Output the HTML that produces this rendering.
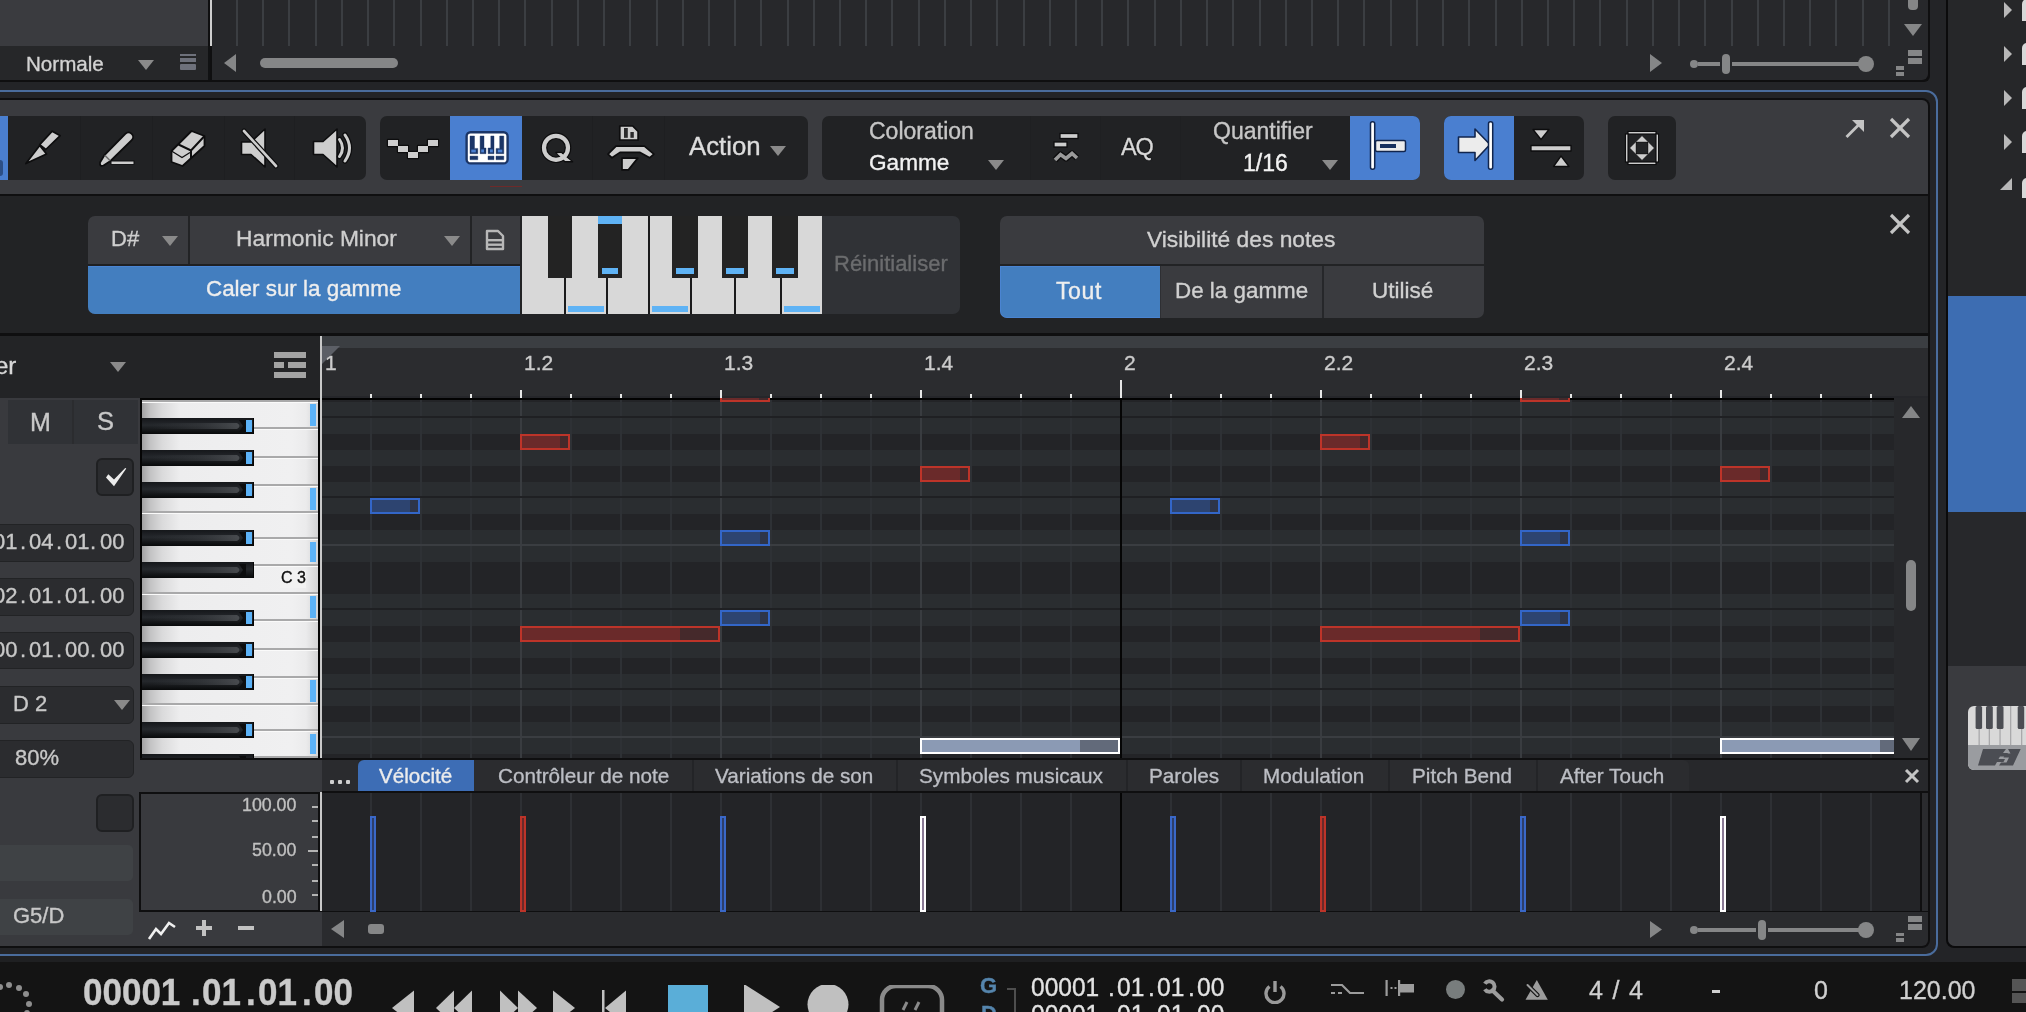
<!DOCTYPE html>
<html><head><meta charset="utf-8"><style>
html,body{margin:0;padding:0;width:2026px;height:1012px;overflow:hidden;background:#232427;}
body{position:relative;font-family:"Liberation Sans", sans-serif;}
body>div{position:absolute;box-sizing:border-box;}
.t{white-space:nowrap;will-change:transform;-webkit-text-stroke:0.35px currentColor;}
</style></head><body>
<div style="left:0px;top:0px;width:2026px;height:1012px;background:#232427;"></div>
<div style="left:0px;top:0px;width:1930px;height:82px;background:#0f0f10;border-bottom-right-radius:6px;"></div>
<div style="left:212px;top:0px;width:1716px;height:80px;background:#27282b;border-bottom-right-radius:6px;"></div>
<div style="left:0px;top:0px;width:208px;height:46px;background:#3a3b3f;"></div>
<div style="left:0px;top:46px;width:208px;height:34px;background:#262729;"></div>
<div style="left:208px;top:46px;width:2px;height:34px;background:#111213;"></div>
<div style="left:210px;top:0px;width:2px;height:46px;background:#cfcfcf;"></div>
<div style="left:236px;top:0px;width:2px;height:46px;background:#3b3e42;"></div>
<div style="left:262px;top:0px;width:2px;height:46px;background:#3b3e42;"></div>
<div style="left:288px;top:0px;width:2px;height:46px;background:#3b3e42;"></div>
<div style="left:315px;top:0px;width:2px;height:46px;background:#3b3e42;"></div>
<div style="left:341px;top:0px;width:2px;height:46px;background:#3b3e42;"></div>
<div style="left:367px;top:0px;width:2px;height:46px;background:#3b3e42;"></div>
<div style="left:393px;top:0px;width:2px;height:46px;background:#3b3e42;"></div>
<div style="left:420px;top:0px;width:2px;height:46px;background:#3b3e42;"></div>
<div style="left:446px;top:0px;width:2px;height:46px;background:#3b3e42;"></div>
<div style="left:472px;top:0px;width:2px;height:46px;background:#3b3e42;"></div>
<div style="left:498px;top:0px;width:2px;height:46px;background:#3b3e42;"></div>
<div style="left:524px;top:0px;width:2px;height:46px;background:#3b3e42;"></div>
<div style="left:551px;top:0px;width:2px;height:46px;background:#3b3e42;"></div>
<div style="left:577px;top:0px;width:2px;height:46px;background:#3b3e42;"></div>
<div style="left:603px;top:0px;width:2px;height:46px;background:#3b3e42;"></div>
<div style="left:629px;top:0px;width:2px;height:46px;background:#3b3e42;"></div>
<div style="left:656px;top:0px;width:2px;height:46px;background:#3b3e42;"></div>
<div style="left:682px;top:0px;width:2px;height:46px;background:#3b3e42;"></div>
<div style="left:708px;top:0px;width:2px;height:46px;background:#3b3e42;"></div>
<div style="left:734px;top:0px;width:2px;height:46px;background:#3b3e42;"></div>
<div style="left:760px;top:0px;width:2px;height:46px;background:#3b3e42;"></div>
<div style="left:787px;top:0px;width:2px;height:46px;background:#3b3e42;"></div>
<div style="left:813px;top:0px;width:2px;height:46px;background:#3b3e42;"></div>
<div style="left:839px;top:0px;width:2px;height:46px;background:#3b3e42;"></div>
<div style="left:865px;top:0px;width:2px;height:46px;background:#3b3e42;"></div>
<div style="left:891px;top:0px;width:2px;height:46px;background:#3b3e42;"></div>
<div style="left:918px;top:0px;width:2px;height:46px;background:#3b3e42;"></div>
<div style="left:944px;top:0px;width:2px;height:46px;background:#3b3e42;"></div>
<div style="left:970px;top:0px;width:2px;height:46px;background:#3b3e42;"></div>
<div style="left:996px;top:0px;width:2px;height:46px;background:#3b3e42;"></div>
<div style="left:1023px;top:0px;width:2px;height:46px;background:#3b3e42;"></div>
<div style="left:1049px;top:0px;width:2px;height:46px;background:#3b3e42;"></div>
<div style="left:1075px;top:0px;width:2px;height:46px;background:#3b3e42;"></div>
<div style="left:1101px;top:0px;width:2px;height:46px;background:#3b3e42;"></div>
<div style="left:1127px;top:0px;width:2px;height:46px;background:#3b3e42;"></div>
<div style="left:1154px;top:0px;width:2px;height:46px;background:#3b3e42;"></div>
<div style="left:1180px;top:0px;width:2px;height:46px;background:#3b3e42;"></div>
<div style="left:1206px;top:0px;width:2px;height:46px;background:#3b3e42;"></div>
<div style="left:1232px;top:0px;width:2px;height:46px;background:#3b3e42;"></div>
<div style="left:1259px;top:0px;width:2px;height:46px;background:#3b3e42;"></div>
<div style="left:1285px;top:0px;width:2px;height:46px;background:#3b3e42;"></div>
<div style="left:1311px;top:0px;width:2px;height:46px;background:#3b3e42;"></div>
<div style="left:1337px;top:0px;width:2px;height:46px;background:#3b3e42;"></div>
<div style="left:1363px;top:0px;width:2px;height:46px;background:#3b3e42;"></div>
<div style="left:1390px;top:0px;width:2px;height:46px;background:#3b3e42;"></div>
<div style="left:1416px;top:0px;width:2px;height:46px;background:#3b3e42;"></div>
<div style="left:1442px;top:0px;width:2px;height:46px;background:#3b3e42;"></div>
<div style="left:1468px;top:0px;width:2px;height:46px;background:#3b3e42;"></div>
<div style="left:1495px;top:0px;width:2px;height:46px;background:#3b3e42;"></div>
<div style="left:1521px;top:0px;width:2px;height:46px;background:#3b3e42;"></div>
<div style="left:1547px;top:0px;width:2px;height:46px;background:#3b3e42;"></div>
<div style="left:1573px;top:0px;width:2px;height:46px;background:#3b3e42;"></div>
<div style="left:1599px;top:0px;width:2px;height:46px;background:#3b3e42;"></div>
<div style="left:1626px;top:0px;width:2px;height:46px;background:#3b3e42;"></div>
<div style="left:1652px;top:0px;width:2px;height:46px;background:#3b3e42;"></div>
<div style="left:1678px;top:0px;width:2px;height:46px;background:#3b3e42;"></div>
<div style="left:1704px;top:0px;width:2px;height:46px;background:#3b3e42;"></div>
<div style="left:1731px;top:0px;width:2px;height:46px;background:#3b3e42;"></div>
<div style="left:1757px;top:0px;width:2px;height:46px;background:#3b3e42;"></div>
<div style="left:1783px;top:0px;width:2px;height:46px;background:#3b3e42;"></div>
<div style="left:1809px;top:0px;width:2px;height:46px;background:#3b3e42;"></div>
<div style="left:1835px;top:0px;width:2px;height:46px;background:#3b3e42;"></div>
<div style="left:1862px;top:0px;width:2px;height:46px;background:#3b3e42;"></div>
<div style="left:1888px;top:0px;width:2px;height:46px;background:#3b3e42;"></div>
<div class="t" style="left:26px;top:53.56px;font-size:20.6px;line-height:20.6px;color:#d2d2d2;font-weight:normal;">Normale</div>
<svg style="position:absolute;left:138px;top:60px;" width="16" height="10" viewBox="0 0 16 10"><polygon points="0,0 16,0 8.0,10" fill="#8a8a8a"/></svg>
<div style="left:180px;top:54px;width:16px;height:2px;background:#6e717b;"></div>
<div style="left:180px;top:58px;width:16px;height:4px;background:#6e717b;"></div>
<div style="left:180px;top:64px;width:16px;height:6px;background:#6e717b;border-radius:1px;"></div>
<svg style="position:absolute;left:224px;top:54px;" width="12" height="18" viewBox="0 0 12 18"><polygon points="12,0 12,18 0,9.0" fill="#858687"/></svg>
<div style="left:260px;top:58px;width:138px;height:10px;background:#858687;border-radius:5px;"></div>
<svg style="position:absolute;left:1650px;top:54px;" width="12" height="18" viewBox="0 0 12 18"><polygon points="0,0 0,18 12,9.0" fill="#858687"/></svg>
<div style="left:1698px;top:62px;width:22px;height:4px;background:#858687;"></div>
<div style="left:1732px;top:62px;width:133px;height:4px;background:#858687;"></div>
<div style="left:1690px;top:60px;width:8px;height:8px;background:#858687;border-radius:50%;"></div>
<div style="left:1722px;top:54px;width:8px;height:20px;background:#858687;border-radius:4px;"></div>
<div style="left:1858px;top:56px;width:16px;height:16px;background:#858687;border-radius:50%;"></div>
<div style="left:1908px;top:50px;width:14px;height:6px;background:#858687;"></div>
<div style="left:1908px;top:58px;width:14px;height:6px;background:#858687;"></div>
<div style="left:1896px;top:66px;width:8px;height:4px;background:#858687;"></div>
<div style="left:1896px;top:72px;width:8px;height:4px;background:#858687;"></div>
<div style="left:1908px;top:-6px;width:10px;height:16px;background:#858687;border-radius:4px;"></div>
<svg style="position:absolute;left:1904px;top:24px;" width="18" height="12" viewBox="0 0 18 12"><polygon points="0,0 18,0 9.0,12" fill="#858687"/></svg>
<div style="left:0px;top:82px;width:1946px;height:930px;background:#232427;"></div>
<div style="left:-10px;top:98px;width:1940px;height:850px;background:#0f0f10;border-radius:8px;"></div>
<div style="left:0px;top:100px;width:1928px;height:94px;background:#3a3b3f;border-top-right-radius:6px;"></div>
<div style="left:-10px;top:116px;width:376px;height:64px;background:#212224;border-radius:7px;"></div>
<div style="left:0px;top:116px;width:8px;height:64px;background:#4a7fd0;"></div>
<div style="left:0px;top:160px;width:3px;height:16px;background:#2c4f86;border-radius:0 4px 4px 0;"></div>
<div style="left:80px;top:116px;width:1px;height:64px;background:#1e1f21;"></div>
<div style="left:152px;top:116px;width:1px;height:64px;background:#1e1f21;"></div>
<div style="left:224px;top:116px;width:1px;height:64px;background:#1e1f21;"></div>
<div style="left:294px;top:116px;width:1px;height:64px;background:#1e1f21;"></div>
<svg style="position:absolute;left:20px;top:126px;" width="46" height="44" viewBox="0 0 46 44"><g stroke="#0d0d0e" stroke-width="1.7" stroke-linejoin="round" fill="#cdcdcd"><polygon points="32.2,5.2 40.2,9.7 25.8,23.5 19.7,18.7"/><polygon points="19.7,19.5 26.5,28 5.9,37.6"/></g></svg>
<svg style="position:absolute;left:95px;top:128px;" width="44" height="42" viewBox="0 0 44 42"><path d="M9.5,27 L30.3,5.8 A4.5,4.5 0 0 1 36.7,12.2 L15.5,33 L8.5,37.5 Q4.5,39 5,34.5 Z" fill="#cdcdcd" stroke="#0d0d0e" stroke-width="1.8" stroke-linejoin="round"/><line x1="9.8" y1="27.3" x2="15.2" y2="32.7" stroke="#6d6d6d" stroke-width="1.6"/><rect x="15.5" y="32.5" width="24" height="4" fill="#0d0d0e"/><rect x="16.5" y="33.5" width="22" height="2.5" fill="#cdcdcd"/></svg>
<svg style="position:absolute;left:166px;top:126px;" width="44" height="46" viewBox="0 0 44 46"><polygon points="25.5,5 38.5,10 38.5,20 16.5,40 5.5,36 5.5,25" fill="#cdcdcd" stroke="#0d0d0e" stroke-width="1.8" stroke-linejoin="round"/><polyline points="12.5,18.5 25,24.5 38.5,10" stroke="#0d0d0e" stroke-width="2" fill="none"/><line x1="25" y1="24.5" x2="25" y2="32" stroke="#0d0d0e" stroke-width="2"/><polyline points="5.5,25 16,31.5 24,26.5" stroke="#0d0d0e" stroke-width="1.3" fill="none"/></svg>
<svg style="position:absolute;left:236px;top:124px;" width="46" height="48" viewBox="0 0 46 48"><g stroke="#0d0d0e" stroke-width="1.6" stroke-linejoin="round" fill="#cdcdcd"><polygon points="5.5,18 15,18 29,5 29,43 15,30.5 5.5,30.5"/></g><line x1="8" y1="7" x2="40" y2="42" stroke="#0d0d0e" stroke-width="5" stroke-linecap="round"/><line x1="8" y1="7" x2="40" y2="42" stroke="#cdcdcd" stroke-width="2.6" stroke-linecap="round"/></svg>
<svg style="position:absolute;left:308px;top:124px;" width="48" height="48" viewBox="0 0 48 48"><g stroke="#0d0d0e" stroke-width="1.6" stroke-linejoin="round" fill="#cdcdcd"><polygon points="5.5,17.5 15,17.5 29,5 29,43 15,30.5 5.5,30.5"/></g><path d="M31.5,15.5 Q37.5,24 31.5,32.5" stroke="#0d0d0e" stroke-width="5.5" fill="none" stroke-linecap="round"/><path d="M31.5,15.5 Q37.5,24 31.5,32.5" stroke="#cdcdcd" stroke-width="3" fill="none" stroke-linecap="round"/><path d="M37,11 Q46,24 37,37" stroke="#0d0d0e" stroke-width="5.5" fill="none" stroke-linecap="round"/><path d="M37,11 Q46,24 37,37" stroke="#cdcdcd" stroke-width="3" fill="none" stroke-linecap="round"/></svg>
<div style="left:380px;top:116px;width:428px;height:64px;background:#212224;border-radius:7px;"></div>
<div style="left:450px;top:116px;width:72px;height:64px;background:#4a7fd0;"></div>
<div style="left:490px;top:186px;width:32px;height:1px;background:#6e2a2a;"></div>
<div style="left:592px;top:116px;width:1px;height:64px;background:#1e1f21;"></div>
<div style="left:664px;top:116px;width:1px;height:64px;background:#1e1f21;"></div>
<svg style="position:absolute;left:385px;top:137px;" width="56" height="24" viewBox="0 0 56 24"><g fill="#0d0d0e" stroke="#0d0d0e" stroke-width="2.4" stroke-linejoin="round"><rect x="3" y="3" width="10" height="6"/><rect x="13" y="9" width="10" height="6"/><rect x="23" y="15" width="10" height="6"/><rect x="33" y="9" width="10" height="6"/><rect x="43" y="3" width="10" height="6"/></g><g fill="#cdcdcd"><rect x="3" y="3" width="10" height="6"/><rect x="13" y="9" width="10" height="6"/><rect x="23" y="15" width="10" height="6"/><rect x="33" y="9" width="10" height="6"/><rect x="43" y="3" width="10" height="6"/></g></svg>
<svg style="position:absolute;left:464px;top:130px;" width="46" height="36" viewBox="0 0 46 36"><rect x="2.6" y="2.2" width="41" height="31.2" rx="4" fill="#ffffff" stroke="#1b3566" stroke-width="2.4"/><g fill="#1b3566" stroke="#1b3566" stroke-width="0.4" stroke-linejoin="round"><path d="M6,6 h4.5 v12.4 h3.3 v5.3 h-7.8z"/><path d="M16.1,6 h3.9 v12 h2 v5.7 h-5.9z"/><path d="M26.8,6 h3.2 v17.7 h-5.9 v-5.7 h2.7z"/><path d="M35.7,6 h4.1 v17.7 h-7.7 v-5.3 h3.6z"/><rect x="6" y="26.1" width="7.8" height="3.6"/><rect x="24" y="26.1" width="6" height="3.6"/><rect x="32" y="26.1" width="7.8" height="3.6"/></g><g fill="#4a7fd0"><rect x="7.3" y="19.6" width="4.5" height="2.8"/><rect x="17.2" y="19.4" width="2.8" height="3"/><rect x="26" y="19.4" width="2.8" height="3"/><rect x="33.8" y="19.6" width="4.5" height="2.8"/></g></svg>
<svg style="position:absolute;left:538px;top:130px;" width="38" height="36" viewBox="0 0 38 36"><circle cx="18" cy="17.8" r="12" stroke="#0d0d0e" stroke-width="6.6" fill="none"/><polygon points="18,22.5 23.5,22.5 34.5,31.8 27,31.8" fill="#cdcdcd" stroke="#0d0d0e" stroke-width="1.6" stroke-linejoin="round"/><circle cx="18" cy="17.8" r="12" stroke="#cdcdcd" stroke-width="4.2" fill="none"/><polygon points="18.8,23.3 23.2,23.3 33,31 27.3,31" fill="#cdcdcd"/></svg>
<svg style="position:absolute;left:604px;top:122px;" width="54" height="52" viewBox="0 0 54 52"><g stroke="#0d0d0e" stroke-width="1.7" stroke-linejoin="round" fill="#cdcdcd"><path d="M15.8,4 H28.7 L34.1,9.5 V18 H15.8 Z"/><path d="M12,24.1 H40.4 L49.9,32.1 L45.6,35.8 L36.1,30.4 H16 L8,35.8 L4,32.1 Z"/><path d="M18,36.1 H33.8 L24.4,47.9 H18 Z"/></g><g fill="#2a2a2b"><rect x="20" y="6" width="3.8" height="9.8"/><rect x="26.4" y="10" width="3.4" height="5.8"/></g></svg>
<div class="t" style="left:689px;top:133.66px;font-size:25.8px;line-height:25.8px;color:#dcdcdc;font-weight:normal;">Action</div>
<svg style="position:absolute;left:770px;top:146px;" width="16" height="10" viewBox="0 0 16 10"><polygon points="0,0 16,0 8.0,10" fill="#8a8a8a"/></svg>
<div style="left:822px;top:116px;width:598px;height:64px;background:#212224;border-radius:7px;"></div>
<div style="left:1350px;top:116px;width:70px;height:64px;background:#4a7fd0;border-radius:0 7px 7px 0;"></div>
<div style="left:1030px;top:116px;width:1px;height:64px;background:#1f2022;"></div>
<div style="left:1100px;top:116px;width:1px;height:64px;background:#1f2022;"></div>
<div style="left:1180px;top:116px;width:1px;height:64px;background:#1f2022;"></div>
<div class="t" style="left:869px;top:119.53px;font-size:23px;line-height:23px;color:#c6c6c6;font-weight:normal;">Coloration</div>
<div class="t" style="left:869px;top:151.87px;font-size:22.6px;line-height:22.6px;color:#f2f2f2;font-weight:normal;">Gamme</div>
<svg style="position:absolute;left:988px;top:160px;" width="16" height="10" viewBox="0 0 16 10"><polygon points="0,0 16,0 8.0,10" fill="#8a8a8a"/></svg>
<svg style="position:absolute;left:1050px;top:130px;" width="32" height="36" viewBox="0 0 32 36"><g fill="#cdcdcd" stroke="#0d0d0e" stroke-width="1.3"><rect x="10" y="3.5" width="18" height="5"/><rect x="4" y="12" width="13" height="5"/></g><path d="M5,30 L10.5,24.5 L16,28.5 L22,23.5 L27,28" stroke="#0d0d0e" stroke-width="6.2" fill="none" stroke-linejoin="round"/><path d="M5,30 L10.5,24.5 L16,28.5 L22,23.5 L27,28" stroke="#9a9a9a" stroke-width="3.6" fill="none" stroke-linejoin="miter"/></svg>
<div class="t" style="left:1121.3px;top:135.81px;font-size:23.5px;line-height:23.5px;color:#d8d8d8;font-weight:normal;letter-spacing:-1.1px;text-shadow:0 0 1.5px #000,0 0 1px #000;">AQ</div>
<div class="t" style="left:1213px;top:119.53px;font-size:23px;line-height:23px;color:#c6c6c6;font-weight:normal;">Quantifier</div>
<div class="t" style="left:1243px;top:151.53px;font-size:23px;line-height:23px;color:#f2f2f2;font-weight:normal;">1/16</div>
<svg style="position:absolute;left:1322px;top:160px;" width="16" height="10" viewBox="0 0 16 10"><polygon points="0,0 16,0 8.0,10" fill="#8a8a8a"/></svg>
<svg style="position:absolute;left:1366px;top:120px;" width="44" height="52" viewBox="0 0 44 52"><rect x="4.5" y="1.8" width="4.2" height="47.5" rx="2" fill="#ffffff" stroke="#11254d" stroke-width="1.5"/><rect x="9.5" y="20.5" width="30" height="11" rx="1.5" fill="#ececec" stroke="#11254d" stroke-width="1.5"/><rect x="14" y="24" width="16" height="4" fill="#17305e"/></svg>
<div style="left:1444px;top:116px;width:140px;height:64px;background:#212224;border-radius:7px;"></div>
<div style="left:1444px;top:116px;width:70px;height:64px;background:#4a7fd0;border-radius:7px 0 0 7px;"></div>
<svg style="position:absolute;left:1454px;top:120px;" width="44" height="52" viewBox="0 0 44 52"><path d="M4.5,17 h16.5 v-8 l15,15.5 l-15,16 v-8 h-16.5z" fill="#ececec" stroke="#11254d" stroke-width="1.6" stroke-linejoin="round"/><rect x="34.5" y="1.8" width="4.2" height="47.5" rx="2" fill="#ffffff" stroke="#11254d" stroke-width="1.5"/></svg>
<svg style="position:absolute;left:1528px;top:126px;" width="48" height="44" viewBox="0 0 48 44"><g fill="#cdcdcd" stroke="#0d0d0e" stroke-width="1.3" stroke-linejoin="round"><polygon points="5,3.5 21,3.5 13,13.5"/><rect x="3" y="19.5" width="40" height="5.5"/><polygon points="25.5,40.5 41,40.5 33,30"/></g></svg>
<div style="left:1608px;top:116px;width:68px;height:64px;background:#212224;border-radius:7px;"></div>
<svg style="position:absolute;left:1623px;top:129px;" width="38" height="38" viewBox="0 0 38 38"><g fill="#e2e2e2" stroke="#0d0d0e" stroke-width="1.2"><rect x="5" y="2.5" width="28" height="2.5"/><rect x="5" y="33" width="28" height="2.5"/><rect x="2.5" y="5" width="2.5" height="28"/><rect x="33" y="5" width="2.5" height="28"/></g><polygon points="19,6.5 31.5,19 19,31.5 6.5,19" fill="#cdcdcd" stroke="#0d0d0e" stroke-width="0.8"/><rect x="13.3" y="13.3" width="11.4" height="11.4" fill="#232426" stroke="#0d0d0e" stroke-width="1"/></svg>
<svg style="position:absolute;left:1843px;top:117px;" width="24" height="24" viewBox="0 0 24 24"><line x1="3.5" y1="20" x2="18" y2="5.5" stroke="#c4c4c4" stroke-width="2.8"/><polygon points="9,3 21,3 21,15" fill="#c4c4c4"/></svg>
<svg style="position:absolute;left:1888px;top:116px;" width="24" height="24" viewBox="0 0 24 24"><g stroke="#c4c4c4" stroke-width="3.2"><line x1="3" y1="3" x2="21" y2="21"/><line x1="21" y1="3" x2="3" y2="21"/></g></svg>
<div style="left:0px;top:196px;width:1928px;height:137px;background:#222325;"></div>
<div style="left:88px;top:216px;width:432px;height:98px;background:#3a3b3f;border-radius:7px 0 0 7px;"></div>
<div style="left:188px;top:216px;width:2px;height:48px;background:#222325;"></div>
<div style="left:470px;top:216px;width:2px;height:48px;background:#222325;"></div>
<div style="left:88px;top:264px;width:432px;height:2px;background:#1f2022;"></div>
<div style="left:88px;top:266px;width:432px;height:48px;background:#437ebf;border-radius:0 0 0 7px;border-top:1px solid #4a84d2;"></div>
<div class="t" style="left:111px;top:228.08px;font-size:22px;line-height:22px;color:#cfcfcf;font-weight:normal;">D#</div>
<svg style="position:absolute;left:162px;top:236px;" width="16" height="10" viewBox="0 0 16 10"><polygon points="0,0 16,0 8.0,10" fill="#8a8a8a"/></svg>
<div class="t" style="left:236px;top:227.40px;font-size:22.8px;line-height:22.8px;color:#cfcfcf;font-weight:normal;">Harmonic Minor</div>
<svg style="position:absolute;left:444px;top:236px;" width="16" height="10" viewBox="0 0 16 10"><polygon points="0,0 16,0 8.0,10" fill="#8a8a8a"/></svg>
<svg style="position:absolute;left:484px;top:228px;" width="24" height="24" viewBox="0 0 24 24"><path d="M3,3 h11 l5,5 v13 h-16z" fill="none" stroke="#b8b8b8" stroke-width="2.4" stroke-linejoin="round"/><rect x="3" y="11" width="16" height="2.4" fill="#b8b8b8"/><rect x="3" y="15.5" width="16" height="2.4" fill="#b8b8b8"/></svg>
<div class="t" style="left:206px;top:278.24px;font-size:22.4px;line-height:22.4px;color:#eeeeee;font-weight:normal;">Caler sur la gamme</div>
<div style="left:522px;top:216px;width:300px;height:98px;background:#1a1a1b;"></div>
<div style="left:522px;top:216px;width:42px;height:98px;background:#d8d8d8;"></div>
<div style="left:566px;top:216px;width:40px;height:98px;background:#d8d8d8;"></div>
<div style="left:608px;top:216px;width:40px;height:98px;background:#d8d8d8;"></div>
<div style="left:650px;top:216px;width:40px;height:98px;background:#d8d8d8;"></div>
<div style="left:692px;top:216px;width:42px;height:98px;background:#d8d8d8;"></div>
<div style="left:736px;top:216px;width:44px;height:98px;background:#d8d8d8;"></div>
<div style="left:782px;top:216px;width:40px;height:98px;background:#d8d8d8;"></div>
<div style="left:548px;top:216px;width:24px;height:62px;background:#232323;"></div>
<div style="left:598px;top:216px;width:24px;height:62px;background:#232323;"></div>
<div style="left:672px;top:216px;width:26px;height:62px;background:#232323;"></div>
<div style="left:722px;top:216px;width:26px;height:62px;background:#232323;"></div>
<div style="left:772px;top:216px;width:26px;height:62px;background:#232323;"></div>
<div style="left:598px;top:216px;width:24px;height:8px;background:#5fb3f5;"></div>
<div style="left:602px;top:268px;width:16px;height:6px;background:#5fb3f5;"></div>
<div style="left:676px;top:268px;width:18px;height:6px;background:#5fb3f5;"></div>
<div style="left:726px;top:268px;width:18px;height:6px;background:#5fb3f5;"></div>
<div style="left:776px;top:268px;width:18px;height:6px;background:#5fb3f5;"></div>
<div style="left:568px;top:306px;width:36px;height:6px;background:#5fb3f5;"></div>
<div style="left:652px;top:306px;width:36px;height:6px;background:#5fb3f5;"></div>
<div style="left:784px;top:306px;width:36px;height:6px;background:#5fb3f5;"></div>
<div style="left:822px;top:216px;width:138px;height:98px;background:#303236;border-radius:0 7px 7px 0;"></div>
<div class="t" style="left:834px;top:253.18px;font-size:22px;line-height:22px;color:#6b6c6e;font-weight:normal;">Réinitialiser</div>
<div style="left:1000px;top:216px;width:484px;height:102px;background:#3a3b3f;border-radius:7px;"></div>
<div style="left:1000px;top:264px;width:484px;height:2px;background:#222325;"></div>
<div style="left:1000px;top:266px;width:160px;height:52px;background:#437ebf;border-radius:0 0 0 7px;border-top:1px solid #4a84d2;border-left:1px solid #4a84d2;border-bottom:1px solid #4a84d2;"></div>
<div style="left:1160px;top:266px;width:1px;height:52px;background:#2e2f33;"></div>
<div style="left:1322px;top:266px;width:2px;height:52px;background:#26272a;"></div>
<div class="t" style="left:1147px;top:228.20px;font-size:22.8px;line-height:22.8px;color:#d0d0d0;font-weight:normal;">Visibilité des notes</div>
<div class="t" style="left:1056px;top:279.83px;font-size:23px;line-height:23px;color:#eeeeee;font-weight:normal;letter-spacing:0.6px;">Tout</div>
<div class="t" style="left:1175px;top:280.34px;font-size:22.4px;line-height:22.4px;color:#d0d0d0;font-weight:normal;">De la gamme</div>
<div class="t" style="left:1372px;top:280.25px;font-size:22.5px;line-height:22.5px;color:#d0d0d0;font-weight:normal;">Utilisé</div>
<svg style="position:absolute;left:1888px;top:212px;" width="24" height="24" viewBox="0 0 24 24"><g stroke="#c4c4c4" stroke-width="3.2"><line x1="3" y1="3" x2="21" y2="21"/><line x1="21" y1="3" x2="3" y2="21"/></g></svg>
<div style="left:0px;top:333px;width:1928px;height:3px;background:#0f0f10;"></div>
<div style="left:0px;top:336px;width:320px;height:62px;background:#232426;"></div>
<div class="t" style="left:-5px;top:353.68px;font-size:24px;line-height:24px;color:#d8d8d8;font-weight:normal;">er</div>
<svg style="position:absolute;left:110px;top:362px;" width="16" height="10" viewBox="0 0 16 10"><polygon points="0,0 16,0 8.0,10" fill="#8a8a8a"/></svg>
<div style="left:274px;top:352px;width:32px;height:6px;background:#a3a3a3;"></div>
<div style="left:274px;top:362px;width:10px;height:6px;background:#a3a3a3;"></div>
<div style="left:288px;top:362px;width:18px;height:6px;background:#a3a3a3;"></div>
<div style="left:274px;top:372px;width:32px;height:6px;background:#a3a3a3;"></div>
<div style="left:322px;top:336px;width:1606px;height:12px;background:#3b3e42;"></div>
<div style="left:322px;top:348px;width:1606px;height:48px;background:#2b2c2f;"></div>
<div style="left:322px;top:396px;width:1606px;height:2px;background:#25262a;"></div>
<svg style="position:absolute;left:322px;top:346px;" width="20" height="19" viewBox="0 0 20 19"><polygon points="0,0 18,0 0,18" fill="#5c5f66"/></svg>
<div class="t" style="left:325px;top:352.42px;font-size:21px;line-height:21px;color:#cccccc;font-weight:normal;">1</div>
<div class="t" style="left:524px;top:352.42px;font-size:21px;line-height:21px;color:#cccccc;font-weight:normal;">1.2</div>
<div class="t" style="left:724px;top:352.42px;font-size:21px;line-height:21px;color:#cccccc;font-weight:normal;">1.3</div>
<div class="t" style="left:924px;top:352.42px;font-size:21px;line-height:21px;color:#cccccc;font-weight:normal;">1.4</div>
<div class="t" style="left:1124px;top:352.42px;font-size:21px;line-height:21px;color:#cccccc;font-weight:normal;">2</div>
<div class="t" style="left:1324px;top:352.42px;font-size:21px;line-height:21px;color:#cccccc;font-weight:normal;">2.2</div>
<div class="t" style="left:1524px;top:352.42px;font-size:21px;line-height:21px;color:#cccccc;font-weight:normal;">2.3</div>
<div class="t" style="left:1724px;top:352.42px;font-size:21px;line-height:21px;color:#cccccc;font-weight:normal;">2.4</div>
<div style="left:370px;top:394px;width:2px;height:4px;background:#e6e6e6;"></div>
<div style="left:420px;top:394px;width:2px;height:4px;background:#e6e6e6;"></div>
<div style="left:470px;top:394px;width:2px;height:4px;background:#e6e6e6;"></div>
<div style="left:520px;top:390px;width:2px;height:8px;background:#e6e6e6;"></div>
<div style="left:570px;top:394px;width:2px;height:4px;background:#e6e6e6;"></div>
<div style="left:620px;top:394px;width:2px;height:4px;background:#e6e6e6;"></div>
<div style="left:670px;top:394px;width:2px;height:4px;background:#e6e6e6;"></div>
<div style="left:720px;top:390px;width:2px;height:8px;background:#e6e6e6;"></div>
<div style="left:770px;top:394px;width:2px;height:4px;background:#e6e6e6;"></div>
<div style="left:820px;top:394px;width:2px;height:4px;background:#e6e6e6;"></div>
<div style="left:870px;top:394px;width:2px;height:4px;background:#e6e6e6;"></div>
<div style="left:920px;top:390px;width:2px;height:8px;background:#e6e6e6;"></div>
<div style="left:970px;top:394px;width:2px;height:4px;background:#e6e6e6;"></div>
<div style="left:1020px;top:394px;width:2px;height:4px;background:#e6e6e6;"></div>
<div style="left:1070px;top:394px;width:2px;height:4px;background:#e6e6e6;"></div>
<div style="left:1120px;top:380px;width:2px;height:18px;background:#e6e6e6;"></div>
<div style="left:1170px;top:394px;width:2px;height:4px;background:#e6e6e6;"></div>
<div style="left:1220px;top:394px;width:2px;height:4px;background:#e6e6e6;"></div>
<div style="left:1270px;top:394px;width:2px;height:4px;background:#e6e6e6;"></div>
<div style="left:1320px;top:390px;width:2px;height:8px;background:#e6e6e6;"></div>
<div style="left:1370px;top:394px;width:2px;height:4px;background:#e6e6e6;"></div>
<div style="left:1420px;top:394px;width:2px;height:4px;background:#e6e6e6;"></div>
<div style="left:1470px;top:394px;width:2px;height:4px;background:#e6e6e6;"></div>
<div style="left:1520px;top:390px;width:2px;height:8px;background:#e6e6e6;"></div>
<div style="left:1570px;top:394px;width:2px;height:4px;background:#e6e6e6;"></div>
<div style="left:1620px;top:394px;width:2px;height:4px;background:#e6e6e6;"></div>
<div style="left:1670px;top:394px;width:2px;height:4px;background:#e6e6e6;"></div>
<div style="left:1720px;top:390px;width:2px;height:8px;background:#e6e6e6;"></div>
<div style="left:1770px;top:394px;width:2px;height:4px;background:#e6e6e6;"></div>
<div style="left:1820px;top:394px;width:2px;height:4px;background:#e6e6e6;"></div>
<div style="left:1870px;top:394px;width:2px;height:4px;background:#e6e6e6;"></div>
<div style="left:322px;top:398px;width:1572px;height:360px;background:#232427;"></div>
<div style="left:322px;top:398px;width:1572px;height:4px;background:#232427;"></div>
<div style="left:322px;top:402px;width:1572px;height:16px;background:#2a2d30;"></div>
<div style="left:322px;top:418px;width:1572px;height:16px;background:#2a2d30;"></div>
<div style="left:322px;top:434px;width:1572px;height:16px;background:#232427;"></div>
<div style="left:322px;top:450px;width:1572px;height:16px;background:#2a2d30;"></div>
<div style="left:322px;top:466px;width:1572px;height:16px;background:#232427;"></div>
<div style="left:322px;top:482px;width:1572px;height:16px;background:#2a2d30;"></div>
<div style="left:322px;top:498px;width:1572px;height:16px;background:#2a2d30;"></div>
<div style="left:322px;top:514px;width:1572px;height:16px;background:#232427;"></div>
<div style="left:322px;top:530px;width:1572px;height:16px;background:#2a2d30;"></div>
<div style="left:322px;top:546px;width:1572px;height:16px;background:#2a2d30;"></div>
<div style="left:322px;top:562px;width:1572px;height:16px;background:#232427;"></div>
<div style="left:322px;top:578px;width:1572px;height:16px;background:#232427;"></div>
<div style="left:322px;top:594px;width:1572px;height:16px;background:#2a2d30;"></div>
<div style="left:322px;top:610px;width:1572px;height:16px;background:#2a2d30;"></div>
<div style="left:322px;top:626px;width:1572px;height:16px;background:#232427;"></div>
<div style="left:322px;top:642px;width:1572px;height:16px;background:#2a2d30;"></div>
<div style="left:322px;top:658px;width:1572px;height:16px;background:#232427;"></div>
<div style="left:322px;top:674px;width:1572px;height:16px;background:#2a2d30;"></div>
<div style="left:322px;top:690px;width:1572px;height:16px;background:#2a2d30;"></div>
<div style="left:322px;top:706px;width:1572px;height:16px;background:#232427;"></div>
<div style="left:322px;top:722px;width:1572px;height:16px;background:#2a2d30;"></div>
<div style="left:322px;top:738px;width:1572px;height:16px;background:#2a2d30;"></div>
<div style="left:322px;top:754px;width:1572px;height:4px;background:#232427;"></div>
<div style="left:370px;top:398px;width:2px;height:360px;background:#2e3135;"></div>
<div style="left:420px;top:398px;width:2px;height:360px;background:#2e3135;"></div>
<div style="left:470px;top:398px;width:2px;height:360px;background:#2e3135;"></div>
<div style="left:520px;top:398px;width:2px;height:360px;background:#393c40;"></div>
<div style="left:570px;top:398px;width:2px;height:360px;background:#2e3135;"></div>
<div style="left:620px;top:398px;width:2px;height:360px;background:#2e3135;"></div>
<div style="left:670px;top:398px;width:2px;height:360px;background:#2e3135;"></div>
<div style="left:720px;top:398px;width:2px;height:360px;background:#393c40;"></div>
<div style="left:770px;top:398px;width:2px;height:360px;background:#2e3135;"></div>
<div style="left:820px;top:398px;width:2px;height:360px;background:#2e3135;"></div>
<div style="left:870px;top:398px;width:2px;height:360px;background:#2e3135;"></div>
<div style="left:920px;top:398px;width:2px;height:360px;background:#393c40;"></div>
<div style="left:970px;top:398px;width:2px;height:360px;background:#2e3135;"></div>
<div style="left:1020px;top:398px;width:2px;height:360px;background:#2e3135;"></div>
<div style="left:1070px;top:398px;width:2px;height:360px;background:#2e3135;"></div>
<div style="left:1120px;top:398px;width:2px;height:360px;background:#050505;"></div>
<div style="left:1170px;top:398px;width:2px;height:360px;background:#2e3135;"></div>
<div style="left:1220px;top:398px;width:2px;height:360px;background:#2e3135;"></div>
<div style="left:1270px;top:398px;width:2px;height:360px;background:#2e3135;"></div>
<div style="left:1320px;top:398px;width:2px;height:360px;background:#393c40;"></div>
<div style="left:1370px;top:398px;width:2px;height:360px;background:#2e3135;"></div>
<div style="left:1420px;top:398px;width:2px;height:360px;background:#2e3135;"></div>
<div style="left:1470px;top:398px;width:2px;height:360px;background:#2e3135;"></div>
<div style="left:1520px;top:398px;width:2px;height:360px;background:#393c40;"></div>
<div style="left:1570px;top:398px;width:2px;height:360px;background:#2e3135;"></div>
<div style="left:1620px;top:398px;width:2px;height:360px;background:#2e3135;"></div>
<div style="left:1670px;top:398px;width:2px;height:360px;background:#2e3135;"></div>
<div style="left:1720px;top:398px;width:2px;height:360px;background:#393c40;"></div>
<div style="left:1770px;top:398px;width:2px;height:360px;background:#2e3135;"></div>
<div style="left:1820px;top:398px;width:2px;height:360px;background:#2e3135;"></div>
<div style="left:1870px;top:398px;width:2px;height:360px;background:#2e3135;"></div>
<div style="left:322px;top:416px;width:1572px;height:2px;background:#1f2023;"></div>
<div style="left:322px;top:496px;width:1572px;height:2px;background:#1f2023;"></div>
<div style="left:322px;top:544px;width:1572px;height:2px;background:#3a3d41;"></div>
<div style="left:322px;top:608px;width:1572px;height:2px;background:#1f2023;"></div>
<div style="left:322px;top:688px;width:1572px;height:2px;background:#1f2023;"></div>
<div style="left:322px;top:736px;width:1572px;height:2px;background:#3a3d41;"></div>
<div style="left:1120px;top:398px;width:2px;height:360px;background:#050505;"></div>
<div style="left:322px;top:398px;width:1572px;height:2px;background:#020202;"></div>
<div style="left:322px;top:398px;width:1572px;height:360px;overflow:hidden;"><div style="position:absolute;left:398px;top:-12px;width:50px;height:16px;box-sizing:border-box;border:2px solid #bd3429;background:linear-gradient(90deg,#6a2a2a 37px,#45292b 37px);"></div><div style="position:absolute;left:1198px;top:-12px;width:50px;height:16px;box-sizing:border-box;border:2px solid #bd3429;background:linear-gradient(90deg,#6a2a2a 37px,#45292b 37px);"></div></div>
<div style="left:520px;top:434px;width:50px;height:16px;border:2px solid #bd3429;background:linear-gradient(90deg,#6a2a2a 38px,#45292b 38px);"></div>
<div style="left:370px;top:498px;width:50px;height:16px;border:2px solid #3366c8;background:linear-gradient(90deg,#2d4470 38px,#2e3549 38px);"></div>
<div style="left:920px;top:466px;width:50px;height:16px;border:2px solid #bd3429;background:linear-gradient(90deg,#6a2a2a 38px,#45292b 38px);"></div>
<div style="left:720px;top:530px;width:50px;height:16px;border:2px solid #3366c8;background:linear-gradient(90deg,#2d4470 38px,#2e3549 38px);"></div>
<div style="left:720px;top:610px;width:50px;height:16px;border:2px solid #3366c8;background:linear-gradient(90deg,#2d4470 38px,#2e3549 38px);"></div>
<div style="left:520px;top:626px;width:200px;height:16px;border:2px solid #bd3429;background:linear-gradient(90deg,#6a2a2a 158px,#45292b 158px);"></div>
<div style="left:920px;top:738px;width:200px;height:16px;border:2px solid #ffffff;background:linear-gradient(90deg,#8b9ab4 158px,#626a7a 158px);"></div>
<div style="left:1170px;top:498px;width:50px;height:16px;border:2px solid #3366c8;background:linear-gradient(90deg,#2d4470 38px,#2e3549 38px);"></div>
<div style="left:1320px;top:434px;width:50px;height:16px;border:2px solid #bd3429;background:linear-gradient(90deg,#6a2a2a 38px,#45292b 38px);"></div>
<div style="left:1720px;top:466px;width:50px;height:16px;border:2px solid #bd3429;background:linear-gradient(90deg,#6a2a2a 38px,#45292b 38px);"></div>
<div style="left:1520px;top:530px;width:50px;height:16px;border:2px solid #3366c8;background:linear-gradient(90deg,#2d4470 38px,#2e3549 38px);"></div>
<div style="left:1520px;top:610px;width:50px;height:16px;border:2px solid #3366c8;background:linear-gradient(90deg,#2d4470 38px,#2e3549 38px);"></div>
<div style="left:1320px;top:626px;width:200px;height:16px;border:2px solid #bd3429;background:linear-gradient(90deg,#6a2a2a 158px,#45292b 158px);"></div>
<div style="left:1720px;top:738px;width:174px;height:16px;border:2px solid #ffffff;border-right:none;background:linear-gradient(90deg,#8b9ab4 158px,#626a7a 158px);"></div>
<div style="left:1894px;top:398px;width:34px;height:360px;background:#27282b;"></div>
<svg style="position:absolute;left:1902px;top:406px;" width="18" height="12" viewBox="0 0 18 12"><polygon points="0,12 18,12 9.0,0" fill="#858687"/></svg>
<div style="left:1906px;top:560px;width:10px;height:51px;background:#858687;border-radius:5px;"></div>
<svg style="position:absolute;left:1902px;top:738px;" width="18" height="13" viewBox="0 0 18 13"><polygon points="0,0 18,0 9.0,13" fill="#858687"/></svg>
<div style="left:0px;top:398px;width:140px;height:548px;background:#393a3e;"></div>
<div style="left:8px;top:400px;width:130px;height:44px;background:#303236;"></div>
<div style="left:72px;top:400px;width:1.5px;height:44px;background:#2b2c2f;"></div>
<div class="t" style="left:29.5px;top:409.84px;font-size:25px;line-height:25px;color:#c8c8c8;font-weight:normal;">M</div>
<div class="t" style="left:96.5px;top:409.41px;font-size:25.5px;line-height:25.5px;color:#c8c8c8;font-weight:normal;">S</div>
<div style="left:96px;top:458px;width:38px;height:38px;background:#2b2c2f;border:2px solid #1f2022;border-radius:6px;"></div>
<svg style="position:absolute;left:104px;top:466px;" width="24" height="24" viewBox="0 0 24 24"><polygon points="2,11.4 4.3,8.3 10,13.6 21.2,2 22.3,2.6 10,20.2" fill="#ececec"/></svg>
<div style="left:-10px;top:524px;width:144px;height:38px;background:#2b2c2f;border:1.5px solid #222325;border-radius:6px;"></div>
<div style="left:-10px;top:578px;width:144px;height:38px;background:#2b2c2f;border:1.5px solid #222325;border-radius:6px;"></div>
<div style="left:-10px;top:632px;width:144px;height:37px;background:#2b2c2f;border:1.5px solid #222325;border-radius:6px;"></div>
<div style="left:-10px;top:686px;width:144px;height:38px;background:#2b2c2f;border:1.5px solid #222325;border-radius:6px;"></div>
<div style="left:-10px;top:740px;width:144px;height:38px;background:#2b2c2f;border:1.5px solid #222325;border-radius:6px;"></div>
<div class="t" style="left:-7px;top:530.78px;font-size:22px;line-height:22px;color:#c8c8c8;font-weight:normal;">01</div>
<div class="t" style="left:28.5px;top:530.78px;font-size:22px;line-height:22px;color:#c8c8c8;font-weight:normal;">04</div>
<div class="t" style="left:64.8px;top:530.78px;font-size:22px;line-height:22px;color:#c8c8c8;font-weight:normal;">01</div>
<div class="t" style="left:100.4px;top:530.78px;font-size:22px;line-height:22px;color:#c8c8c8;font-weight:normal;">00</div>
<div class="t" style="left:20px;top:530.78px;font-size:22px;line-height:22px;color:#c8c8c8;font-weight:normal;">.</div>
<div class="t" style="left:55.7px;top:530.78px;font-size:22px;line-height:22px;color:#c8c8c8;font-weight:normal;">.</div>
<div class="t" style="left:90.4px;top:530.78px;font-size:22px;line-height:22px;color:#c8c8c8;font-weight:normal;">.</div>
<div class="t" style="left:-7px;top:584.78px;font-size:22px;line-height:22px;color:#c8c8c8;font-weight:normal;">02</div>
<div class="t" style="left:28.5px;top:584.78px;font-size:22px;line-height:22px;color:#c8c8c8;font-weight:normal;">01</div>
<div class="t" style="left:64.8px;top:584.78px;font-size:22px;line-height:22px;color:#c8c8c8;font-weight:normal;">01</div>
<div class="t" style="left:100.4px;top:584.78px;font-size:22px;line-height:22px;color:#c8c8c8;font-weight:normal;">00</div>
<div class="t" style="left:20px;top:584.78px;font-size:22px;line-height:22px;color:#c8c8c8;font-weight:normal;">.</div>
<div class="t" style="left:55.7px;top:584.78px;font-size:22px;line-height:22px;color:#c8c8c8;font-weight:normal;">.</div>
<div class="t" style="left:90.4px;top:584.78px;font-size:22px;line-height:22px;color:#c8c8c8;font-weight:normal;">.</div>
<div class="t" style="left:-7px;top:638.78px;font-size:22px;line-height:22px;color:#c8c8c8;font-weight:normal;">00</div>
<div class="t" style="left:28.5px;top:638.78px;font-size:22px;line-height:22px;color:#c8c8c8;font-weight:normal;">01</div>
<div class="t" style="left:64.8px;top:638.78px;font-size:22px;line-height:22px;color:#c8c8c8;font-weight:normal;">00</div>
<div class="t" style="left:100.4px;top:638.78px;font-size:22px;line-height:22px;color:#c8c8c8;font-weight:normal;">00</div>
<div class="t" style="left:20px;top:638.78px;font-size:22px;line-height:22px;color:#c8c8c8;font-weight:normal;">.</div>
<div class="t" style="left:55.7px;top:638.78px;font-size:22px;line-height:22px;color:#c8c8c8;font-weight:normal;">.</div>
<div class="t" style="left:90.4px;top:638.78px;font-size:22px;line-height:22px;color:#c8c8c8;font-weight:normal;">.</div>
<div class="t" style="left:13px;top:693.38px;font-size:22px;line-height:22px;color:#c8c8c8;font-weight:normal;">D 2</div>
<svg style="position:absolute;left:114px;top:700px;" width="16" height="10" viewBox="0 0 16 10"><polygon points="0,0 16,0 8.0,10" fill="#8a8a8a"/></svg>
<div class="t" style="left:15px;top:747.38px;font-size:22px;line-height:22px;color:#c8c8c8;font-weight:normal;">80%</div>
<div style="left:96px;top:794px;width:38px;height:38px;background:#2b2c2f;border:2px solid #1f2022;border-radius:6px;"></div>
<div style="left:-10px;top:845px;width:143px;height:36px;background:#3f4245;border-radius:5px;"></div>
<div style="left:-10px;top:899px;width:143px;height:36px;background:#3f4245;border-radius:5px;"></div>
<div class="t" style="left:13px;top:905.38px;font-size:22px;line-height:22px;color:#c8c8c8;font-weight:normal;">G5/D</div>
<div style="left:140px;top:398px;width:182px;height:360px;background:#050505;"></div>
<div style="left:142px;top:400px;width:176px;height:358px;overflow:hidden;background:linear-gradient(90deg,#a2a2a3 0px,#c2c2c3 8px,#dadadb 20px,#ededee 38px,#f0f0f1 150px,#ebebec 164px,#d4d4d5 176px);">
<div style="position:absolute;left:0px;top:192px;width:176px;height:2px;background:#a9a9aa;"></div>
<div style="position:absolute;left:0px;top:194px;width:176px;height:1px;background:#fafafa;"></div>
<div style="position:absolute;left:0px;top:164px;width:176px;height:2px;background:#a9a9aa;"></div>
<div style="position:absolute;left:0px;top:166px;width:176px;height:1px;background:#fafafa;"></div>
<div style="position:absolute;left:0px;top:137px;width:176px;height:2px;background:#a9a9aa;"></div>
<div style="position:absolute;left:0px;top:139px;width:176px;height:1px;background:#fafafa;"></div>
<div style="position:absolute;left:0px;top:111px;width:176px;height:2px;background:#a9a9aa;"></div>
<div style="position:absolute;left:0px;top:113px;width:176px;height:1px;background:#fafafa;"></div>
<div style="position:absolute;left:0px;top:84px;width:176px;height:2px;background:#a9a9aa;"></div>
<div style="position:absolute;left:0px;top:86px;width:176px;height:1px;background:#fafafa;"></div>
<div style="position:absolute;left:0px;top:56px;width:176px;height:2px;background:#a9a9aa;"></div>
<div style="position:absolute;left:0px;top:58px;width:176px;height:1px;background:#fafafa;"></div>
<div style="position:absolute;left:0px;top:27px;width:176px;height:2px;background:#a9a9aa;"></div>
<div style="position:absolute;left:0px;top:29px;width:176px;height:1px;background:#fafafa;"></div>
<div style="position:absolute;left:0px;top:356px;width:176px;height:2px;background:#a9a9aa;"></div>
<div style="position:absolute;left:0px;top:358px;width:176px;height:1px;background:#fafafa;"></div>
<div style="position:absolute;left:0px;top:329px;width:176px;height:2px;background:#a9a9aa;"></div>
<div style="position:absolute;left:0px;top:331px;width:176px;height:1px;background:#fafafa;"></div>
<div style="position:absolute;left:0px;top:303px;width:176px;height:2px;background:#a9a9aa;"></div>
<div style="position:absolute;left:0px;top:305px;width:176px;height:1px;background:#fafafa;"></div>
<div style="position:absolute;left:0px;top:276px;width:176px;height:2px;background:#a9a9aa;"></div>
<div style="position:absolute;left:0px;top:278px;width:176px;height:1px;background:#fafafa;"></div>
<div style="position:absolute;left:0px;top:248px;width:176px;height:2px;background:#a9a9aa;"></div>
<div style="position:absolute;left:0px;top:250px;width:176px;height:1px;background:#fafafa;"></div>
<div style="position:absolute;left:0px;top:219px;width:176px;height:2px;background:#a9a9aa;"></div>
<div style="position:absolute;left:0px;top:221px;width:176px;height:1px;background:#fafafa;"></div>
<div style="position:absolute;left:0px;top:0px;width:176px;height:2px;background:#a9a9aa;"></div>
<div style="position:absolute;left:0px;top:2px;width:176px;height:1px;background:#fafafa;"></div>
<div style="position:absolute;left:168px;top:4px;width:6px;height:22px;background:#5cb2f7;"></div>
<div style="position:absolute;left:168px;top:88px;width:6px;height:22px;background:#5cb2f7;"></div>
<div style="position:absolute;left:168px;top:141.5px;width:6px;height:20.5px;background:#5cb2f7;"></div>
<div style="position:absolute;left:168px;top:195.5px;width:6px;height:22.799999999999955px;background:#5cb2f7;"></div>
<div style="position:absolute;left:168px;top:280px;width:6px;height:22px;background:#5cb2f7;"></div>
<div style="position:absolute;left:168px;top:333.5px;width:6px;height:20.5px;background:#5cb2f7;"></div>
<svg style="position:absolute;left:0;top:18px" width="112" height="16" viewBox="0 0 112 16"><defs><linearGradient id="bkv" x1="0" y1="0" x2="0" y2="1"><stop offset="0" stop-color="#15171a"/><stop offset="0.45" stop-color="#25282c"/><stop offset="1" stop-color="#08090a"/></linearGradient><linearGradient id="bkh" x1="0" y1="0" x2="1" y2="0"><stop offset="0" stop-color="#3a3d41" stop-opacity="0"/><stop offset="0.55" stop-color="#3c3f43" stop-opacity="0.5"/><stop offset="1" stop-color="#55585c" stop-opacity="0.75"/></linearGradient></defs><rect x="0" y="0" width="112" height="16" fill="url(#bkv)"/><path d="M10,5 H95 Q100,8 95,11 H10 Z" fill="url(#bkh)"/><path d="M97,2 L104,2 L104,14 L97,14 L101,8 Z" fill="#0c0d0e"/><rect x="111" y="0" width="1" height="16" fill="#050505"/></svg>
<div style="position:absolute;left:104px;top:20px;width:6px;height:12px;background:#5cb2f7;"></div>
<svg style="position:absolute;left:0;top:50px" width="112" height="16" viewBox="0 0 112 16"><defs><linearGradient id="bkv" x1="0" y1="0" x2="0" y2="1"><stop offset="0" stop-color="#15171a"/><stop offset="0.45" stop-color="#25282c"/><stop offset="1" stop-color="#08090a"/></linearGradient><linearGradient id="bkh" x1="0" y1="0" x2="1" y2="0"><stop offset="0" stop-color="#3a3d41" stop-opacity="0"/><stop offset="0.55" stop-color="#3c3f43" stop-opacity="0.5"/><stop offset="1" stop-color="#55585c" stop-opacity="0.75"/></linearGradient></defs><rect x="0" y="0" width="112" height="16" fill="url(#bkv)"/><path d="M10,5 H95 Q100,8 95,11 H10 Z" fill="url(#bkh)"/><path d="M97,2 L104,2 L104,14 L97,14 L101,8 Z" fill="#0c0d0e"/><rect x="111" y="0" width="1" height="16" fill="#050505"/></svg>
<div style="position:absolute;left:104px;top:52px;width:6px;height:12px;background:#5cb2f7;"></div>
<svg style="position:absolute;left:0;top:82px" width="112" height="16" viewBox="0 0 112 16"><defs><linearGradient id="bkv" x1="0" y1="0" x2="0" y2="1"><stop offset="0" stop-color="#15171a"/><stop offset="0.45" stop-color="#25282c"/><stop offset="1" stop-color="#08090a"/></linearGradient><linearGradient id="bkh" x1="0" y1="0" x2="1" y2="0"><stop offset="0" stop-color="#3a3d41" stop-opacity="0"/><stop offset="0.55" stop-color="#3c3f43" stop-opacity="0.5"/><stop offset="1" stop-color="#55585c" stop-opacity="0.75"/></linearGradient></defs><rect x="0" y="0" width="112" height="16" fill="url(#bkv)"/><path d="M10,5 H95 Q100,8 95,11 H10 Z" fill="url(#bkh)"/><path d="M97,2 L104,2 L104,14 L97,14 L101,8 Z" fill="#0c0d0e"/><rect x="111" y="0" width="1" height="16" fill="#050505"/></svg>
<div style="position:absolute;left:104px;top:84px;width:6px;height:12px;background:#5cb2f7;"></div>
<svg style="position:absolute;left:0;top:130px" width="112" height="16" viewBox="0 0 112 16"><defs><linearGradient id="bkv" x1="0" y1="0" x2="0" y2="1"><stop offset="0" stop-color="#15171a"/><stop offset="0.45" stop-color="#25282c"/><stop offset="1" stop-color="#08090a"/></linearGradient><linearGradient id="bkh" x1="0" y1="0" x2="1" y2="0"><stop offset="0" stop-color="#3a3d41" stop-opacity="0"/><stop offset="0.55" stop-color="#3c3f43" stop-opacity="0.5"/><stop offset="1" stop-color="#55585c" stop-opacity="0.75"/></linearGradient></defs><rect x="0" y="0" width="112" height="16" fill="url(#bkv)"/><path d="M10,5 H95 Q100,8 95,11 H10 Z" fill="url(#bkh)"/><path d="M97,2 L104,2 L104,14 L97,14 L101,8 Z" fill="#0c0d0e"/><rect x="111" y="0" width="1" height="16" fill="#050505"/></svg>
<div style="position:absolute;left:104px;top:132px;width:6px;height:12px;background:#5cb2f7;"></div>
<svg style="position:absolute;left:0;top:162px" width="112" height="16" viewBox="0 0 112 16"><defs><linearGradient id="bkv" x1="0" y1="0" x2="0" y2="1"><stop offset="0" stop-color="#15171a"/><stop offset="0.45" stop-color="#25282c"/><stop offset="1" stop-color="#08090a"/></linearGradient><linearGradient id="bkh" x1="0" y1="0" x2="1" y2="0"><stop offset="0" stop-color="#3a3d41" stop-opacity="0"/><stop offset="0.55" stop-color="#3c3f43" stop-opacity="0.5"/><stop offset="1" stop-color="#55585c" stop-opacity="0.75"/></linearGradient></defs><rect x="0" y="0" width="112" height="16" fill="url(#bkv)"/><path d="M10,5 H95 Q100,8 95,11 H10 Z" fill="url(#bkh)"/><path d="M97,2 L104,2 L104,14 L97,14 L101,8 Z" fill="#0c0d0e"/><rect x="111" y="0" width="1" height="16" fill="#050505"/></svg>
<svg style="position:absolute;left:0;top:210px" width="112" height="16" viewBox="0 0 112 16"><defs><linearGradient id="bkv" x1="0" y1="0" x2="0" y2="1"><stop offset="0" stop-color="#15171a"/><stop offset="0.45" stop-color="#25282c"/><stop offset="1" stop-color="#08090a"/></linearGradient><linearGradient id="bkh" x1="0" y1="0" x2="1" y2="0"><stop offset="0" stop-color="#3a3d41" stop-opacity="0"/><stop offset="0.55" stop-color="#3c3f43" stop-opacity="0.5"/><stop offset="1" stop-color="#55585c" stop-opacity="0.75"/></linearGradient></defs><rect x="0" y="0" width="112" height="16" fill="url(#bkv)"/><path d="M10,5 H95 Q100,8 95,11 H10 Z" fill="url(#bkh)"/><path d="M97,2 L104,2 L104,14 L97,14 L101,8 Z" fill="#0c0d0e"/><rect x="111" y="0" width="1" height="16" fill="#050505"/></svg>
<div style="position:absolute;left:104px;top:212px;width:6px;height:12px;background:#5cb2f7;"></div>
<svg style="position:absolute;left:0;top:242px" width="112" height="16" viewBox="0 0 112 16"><defs><linearGradient id="bkv" x1="0" y1="0" x2="0" y2="1"><stop offset="0" stop-color="#15171a"/><stop offset="0.45" stop-color="#25282c"/><stop offset="1" stop-color="#08090a"/></linearGradient><linearGradient id="bkh" x1="0" y1="0" x2="1" y2="0"><stop offset="0" stop-color="#3a3d41" stop-opacity="0"/><stop offset="0.55" stop-color="#3c3f43" stop-opacity="0.5"/><stop offset="1" stop-color="#55585c" stop-opacity="0.75"/></linearGradient></defs><rect x="0" y="0" width="112" height="16" fill="url(#bkv)"/><path d="M10,5 H95 Q100,8 95,11 H10 Z" fill="url(#bkh)"/><path d="M97,2 L104,2 L104,14 L97,14 L101,8 Z" fill="#0c0d0e"/><rect x="111" y="0" width="1" height="16" fill="#050505"/></svg>
<div style="position:absolute;left:104px;top:244px;width:6px;height:12px;background:#5cb2f7;"></div>
<svg style="position:absolute;left:0;top:274px" width="112" height="16" viewBox="0 0 112 16"><defs><linearGradient id="bkv" x1="0" y1="0" x2="0" y2="1"><stop offset="0" stop-color="#15171a"/><stop offset="0.45" stop-color="#25282c"/><stop offset="1" stop-color="#08090a"/></linearGradient><linearGradient id="bkh" x1="0" y1="0" x2="1" y2="0"><stop offset="0" stop-color="#3a3d41" stop-opacity="0"/><stop offset="0.55" stop-color="#3c3f43" stop-opacity="0.5"/><stop offset="1" stop-color="#55585c" stop-opacity="0.75"/></linearGradient></defs><rect x="0" y="0" width="112" height="16" fill="url(#bkv)"/><path d="M10,5 H95 Q100,8 95,11 H10 Z" fill="url(#bkh)"/><path d="M97,2 L104,2 L104,14 L97,14 L101,8 Z" fill="#0c0d0e"/><rect x="111" y="0" width="1" height="16" fill="#050505"/></svg>
<div style="position:absolute;left:104px;top:276px;width:6px;height:12px;background:#5cb2f7;"></div>
<svg style="position:absolute;left:0;top:322px" width="112" height="16" viewBox="0 0 112 16"><defs><linearGradient id="bkv" x1="0" y1="0" x2="0" y2="1"><stop offset="0" stop-color="#15171a"/><stop offset="0.45" stop-color="#25282c"/><stop offset="1" stop-color="#08090a"/></linearGradient><linearGradient id="bkh" x1="0" y1="0" x2="1" y2="0"><stop offset="0" stop-color="#3a3d41" stop-opacity="0"/><stop offset="0.55" stop-color="#3c3f43" stop-opacity="0.5"/><stop offset="1" stop-color="#55585c" stop-opacity="0.75"/></linearGradient></defs><rect x="0" y="0" width="112" height="16" fill="url(#bkv)"/><path d="M10,5 H95 Q100,8 95,11 H10 Z" fill="url(#bkh)"/><path d="M97,2 L104,2 L104,14 L97,14 L101,8 Z" fill="#0c0d0e"/><rect x="111" y="0" width="1" height="16" fill="#050505"/></svg>
<div style="position:absolute;left:104px;top:324px;width:6px;height:12px;background:#5cb2f7;"></div>
<svg style="position:absolute;left:0;top:354px" width="112" height="16" viewBox="0 0 112 16"><defs><linearGradient id="bkv" x1="0" y1="0" x2="0" y2="1"><stop offset="0" stop-color="#15171a"/><stop offset="0.45" stop-color="#25282c"/><stop offset="1" stop-color="#08090a"/></linearGradient><linearGradient id="bkh" x1="0" y1="0" x2="1" y2="0"><stop offset="0" stop-color="#3a3d41" stop-opacity="0"/><stop offset="0.55" stop-color="#3c3f43" stop-opacity="0.5"/><stop offset="1" stop-color="#55585c" stop-opacity="0.75"/></linearGradient></defs><rect x="0" y="0" width="112" height="16" fill="url(#bkv)"/><path d="M10,5 H95 Q100,8 95,11 H10 Z" fill="url(#bkh)"/><path d="M97,2 L104,2 L104,14 L97,14 L101,8 Z" fill="#0c0d0e"/><rect x="111" y="0" width="1" height="16" fill="#050505"/></svg>
<svg style="position:absolute;left:0;top:354px" width="112" height="16" viewBox="0 0 112 16"><defs><linearGradient id="bkv" x1="0" y1="0" x2="0" y2="1"><stop offset="0" stop-color="#15171a"/><stop offset="0.45" stop-color="#25282c"/><stop offset="1" stop-color="#08090a"/></linearGradient><linearGradient id="bkh" x1="0" y1="0" x2="1" y2="0"><stop offset="0" stop-color="#3a3d41" stop-opacity="0"/><stop offset="0.55" stop-color="#3c3f43" stop-opacity="0.5"/><stop offset="1" stop-color="#55585c" stop-opacity="0.75"/></linearGradient></defs><rect x="0" y="0" width="112" height="16" fill="url(#bkv)"/><path d="M10,5 H95 Q100,8 95,11 H10 Z" fill="url(#bkh)"/><path d="M97,2 L104,2 L104,14 L97,14 L101,8 Z" fill="#0c0d0e"/><rect x="111" y="0" width="1" height="16" fill="#050505"/></svg>
</div>
<div style="left:280px;top:570px;width:26px;height:17.5px;background:#f2f2f2;"></div>
<div class="t" style="left:281px;top:570.06px;font-size:16px;line-height:16px;color:#111111;font-weight:normal;">C 3</div>
<div style="left:320px;top:336px;width:2px;height:575px;background:#c9c9c9;"></div>
<div style="left:140px;top:758px;width:1788px;height:2px;background:#0f0f10;"></div>
<div style="left:322px;top:760px;width:1606px;height:31px;background:#27282b;"></div>
<div style="left:140px;top:760px;width:182px;height:32px;background:#393a3e;"></div>
<div style="left:322px;top:760px;width:36px;height:31px;background:#2a2b2e;"></div>
<div style="left:330px;top:780px;width:4px;height:4px;background:#d0d0d0;border-radius:1px;"></div>
<div style="left:338px;top:780px;width:4px;height:4px;background:#d0d0d0;border-radius:1px;"></div>
<div style="left:346px;top:780px;width:4px;height:4px;background:#d0d0d0;border-radius:1px;"></div>
<div style="left:358px;top:760px;width:116px;height:31px;background:#3d6db5;border-radius:6px 0 0 0;"></div>
<div class="t" style="left:379px;top:765.76px;font-size:20.6px;line-height:20.6px;color:#ececec;font-weight:normal;">Vélocité</div>
<div style="left:474px;top:760px;width:218px;height:31px;background:#2b2c2f;"></div>
<div class="t" style="left:498px;top:765.88px;font-size:20.7px;line-height:20.7px;color:#bcbec4;font-weight:normal;">Contrôleur de note</div>
<div style="left:694px;top:760px;width:202px;height:31px;background:#2b2c2f;"></div>
<div class="t" style="left:715px;top:765.88px;font-size:20.7px;line-height:20.7px;color:#bcbec4;font-weight:normal;">Variations de son</div>
<div style="left:898px;top:760px;width:228px;height:31px;background:#2b2c2f;"></div>
<div class="t" style="left:919px;top:765.88px;font-size:20.7px;line-height:20.7px;color:#bcbec4;font-weight:normal;">Symboles musicaux</div>
<div style="left:1128px;top:760px;width:112px;height:31px;background:#2b2c2f;"></div>
<div class="t" style="left:1149px;top:765.88px;font-size:20.7px;line-height:20.7px;color:#bcbec4;font-weight:normal;">Paroles</div>
<div style="left:1242px;top:760px;width:146px;height:31px;background:#2b2c2f;"></div>
<div class="t" style="left:1263px;top:765.88px;font-size:20.7px;line-height:20.7px;color:#bcbec4;font-weight:normal;">Modulation</div>
<div style="left:1390px;top:760px;width:146px;height:31px;background:#2b2c2f;"></div>
<div class="t" style="left:1412px;top:765.88px;font-size:20.7px;line-height:20.7px;color:#bcbec4;font-weight:normal;">Pitch Bend</div>
<div style="left:1538px;top:760px;width:151px;height:31px;background:#2b2c2f;border-radius:0 6px 0 0;"></div>
<div class="t" style="left:1560px;top:765.88px;font-size:20.7px;line-height:20.7px;color:#bcbec4;font-weight:normal;">After Touch</div>
<div style="left:692px;top:760px;width:2px;height:31px;background:#232427;"></div>
<div style="left:896px;top:760px;width:2px;height:31px;background:#232427;"></div>
<div style="left:1126px;top:760px;width:2px;height:31px;background:#232427;"></div>
<div style="left:1240px;top:760px;width:2px;height:31px;background:#232427;"></div>
<div style="left:1388px;top:760px;width:2px;height:31px;background:#232427;"></div>
<div style="left:1536px;top:760px;width:2px;height:31px;background:#232427;"></div>
<svg style="position:absolute;left:1903px;top:767px;" width="18" height="18" viewBox="0 0 18 18"><g stroke="#c4c4c4" stroke-width="3"><line x1="3" y1="3" x2="15" y2="15"/><line x1="15" y1="3" x2="3" y2="15"/></g></svg>
<div style="left:322px;top:791px;width:1606px;height:2px;background:#0f0f10;"></div>
<div style="left:139px;top:792px;width:181px;height:120px;background:#0f0f10;"></div>
<div style="left:141px;top:794px;width:177px;height:116px;background:#393a3e;"></div>
<div class="t" style="left:242px;top:796.93px;font-size:17.8px;line-height:17.8px;color:#c0c0c0;font-weight:normal;">100.00</div>
<div class="t" style="left:251.5px;top:841.63px;font-size:17.8px;line-height:17.8px;color:#c0c0c0;font-weight:normal;">50.00</div>
<div class="t" style="left:261.5px;top:888.93px;font-size:17.8px;line-height:17.8px;color:#c0c0c0;font-weight:normal;">0.00</div>
<div style="left:312px;top:806px;width:6px;height:2px;background:#b4b4b4;"></div>
<div style="left:312px;top:820px;width:6px;height:2px;background:#b4b4b4;"></div>
<div style="left:312px;top:836px;width:6px;height:2px;background:#b4b4b4;"></div>
<div style="left:312px;top:864px;width:6px;height:2px;background:#b4b4b4;"></div>
<div style="left:312px;top:880px;width:6px;height:2px;background:#b4b4b4;"></div>
<div style="left:312px;top:894px;width:6px;height:2px;background:#b4b4b4;"></div>
<div style="left:308px;top:850px;width:10px;height:2px;background:#b4b4b4;"></div>
<div style="left:322px;top:793px;width:1598px;height:118px;background:#232427;"></div>
<div style="left:370px;top:793px;width:2px;height:118px;background:#2e3034;"></div>
<div style="left:420px;top:793px;width:2px;height:118px;background:#2e3034;"></div>
<div style="left:470px;top:793px;width:2px;height:118px;background:#2e3034;"></div>
<div style="left:520px;top:793px;width:2px;height:118px;background:#2e3034;"></div>
<div style="left:570px;top:793px;width:2px;height:118px;background:#2e3034;"></div>
<div style="left:620px;top:793px;width:2px;height:118px;background:#2e3034;"></div>
<div style="left:670px;top:793px;width:2px;height:118px;background:#2e3034;"></div>
<div style="left:720px;top:793px;width:2px;height:118px;background:#2e3034;"></div>
<div style="left:770px;top:793px;width:2px;height:118px;background:#2e3034;"></div>
<div style="left:820px;top:793px;width:2px;height:118px;background:#2e3034;"></div>
<div style="left:870px;top:793px;width:2px;height:118px;background:#2e3034;"></div>
<div style="left:920px;top:793px;width:2px;height:118px;background:#2e3034;"></div>
<div style="left:970px;top:793px;width:2px;height:118px;background:#2e3034;"></div>
<div style="left:1020px;top:793px;width:2px;height:118px;background:#2e3034;"></div>
<div style="left:1070px;top:793px;width:2px;height:118px;background:#2e3034;"></div>
<div style="left:1120px;top:793px;width:2px;height:118px;background:#050505;"></div>
<div style="left:1170px;top:793px;width:2px;height:118px;background:#2e3034;"></div>
<div style="left:1220px;top:793px;width:2px;height:118px;background:#2e3034;"></div>
<div style="left:1270px;top:793px;width:2px;height:118px;background:#2e3034;"></div>
<div style="left:1320px;top:793px;width:2px;height:118px;background:#2e3034;"></div>
<div style="left:1370px;top:793px;width:2px;height:118px;background:#2e3034;"></div>
<div style="left:1420px;top:793px;width:2px;height:118px;background:#2e3034;"></div>
<div style="left:1470px;top:793px;width:2px;height:118px;background:#2e3034;"></div>
<div style="left:1520px;top:793px;width:2px;height:118px;background:#2e3034;"></div>
<div style="left:1570px;top:793px;width:2px;height:118px;background:#2e3034;"></div>
<div style="left:1620px;top:793px;width:2px;height:118px;background:#2e3034;"></div>
<div style="left:1670px;top:793px;width:2px;height:118px;background:#2e3034;"></div>
<div style="left:1720px;top:793px;width:2px;height:118px;background:#2e3034;"></div>
<div style="left:1770px;top:793px;width:2px;height:118px;background:#2e3034;"></div>
<div style="left:1820px;top:793px;width:2px;height:118px;background:#2e3034;"></div>
<div style="left:1870px;top:793px;width:2px;height:118px;background:#2e3034;"></div>
<div style="left:1920px;top:793px;width:2px;height:118px;background:#0f0f10;"></div>
<div style="left:1922px;top:793px;width:6px;height:118px;background:#2a2b2e;"></div>
<div style="left:322px;top:911px;width:1600px;height:1px;background:#0f0f10;"></div>
<div style="left:370px;top:816px;width:6px;height:96px;border:2px solid #3a68c8;background:#2d3f6b;"></div>
<div style="left:520px;top:816px;width:6px;height:96px;border:2px solid #bd3429;background:#6a2a2a;"></div>
<div style="left:720px;top:816px;width:6px;height:96px;border:2px solid #3a68c8;background:#2d3f6b;"></div>
<div style="left:920px;top:816px;width:6px;height:96px;border:2px solid #ffffff;background:#8a7a95;"></div>
<div style="left:1170px;top:816px;width:6px;height:96px;border:2px solid #3a68c8;background:#2d3f6b;"></div>
<div style="left:1320px;top:816px;width:6px;height:96px;border:2px solid #bd3429;background:#6a2a2a;"></div>
<div style="left:1520px;top:816px;width:6px;height:96px;border:2px solid #3a68c8;background:#2d3f6b;"></div>
<div style="left:1720px;top:816px;width:6px;height:96px;border:2px solid #ffffff;background:#8a7a95;"></div>
<div style="left:140px;top:912px;width:182px;height:34px;background:#393a3e;"></div>
<div style="left:322px;top:912px;width:1606px;height:34px;background:#2a2b2e;border-bottom-right-radius:6px;"></div>
<svg style="position:absolute;left:146px;top:918px;" width="32" height="24" viewBox="0 0 32 24"><polyline points="3,21 10,11 15,16 23,5 29,9" stroke="#f0f0f0" stroke-width="2.6" fill="none"/></svg>
<div style="left:196px;top:926px;width:16px;height:4px;background:#c2c2c2;"></div>
<div style="left:202px;top:920px;width:4px;height:16px;background:#c2c2c2;"></div>
<div style="left:238px;top:926px;width:16px;height:4px;background:#c2c2c2;"></div>
<svg style="position:absolute;left:331px;top:920px;" width="13" height="18" viewBox="0 0 13 18"><polygon points="13,0 13,18 0,9.0" fill="#858687"/></svg>
<div style="left:368px;top:923.5px;width:16px;height:10.5px;background:#858687;border-radius:3px;"></div>
<svg style="position:absolute;left:1650px;top:921px;" width="12" height="17" viewBox="0 0 12 17"><polygon points="0,0 0,17 12,8.5" fill="#858687"/></svg>
<div style="left:1698px;top:928px;width:58px;height:4px;background:#858687;"></div>
<div style="left:1768px;top:928px;width:97px;height:4px;background:#858687;"></div>
<div style="left:1690px;top:926px;width:8px;height:8px;background:#858687;border-radius:50%;"></div>
<div style="left:1758px;top:920px;width:8px;height:20px;background:#858687;border-radius:4px;"></div>
<div style="left:1858px;top:922px;width:16px;height:16px;background:#858687;border-radius:50%;"></div>
<div style="left:1908px;top:916px;width:14px;height:6px;background:#858687;"></div>
<div style="left:1908px;top:924px;width:14px;height:6px;background:#858687;"></div>
<div style="left:1896px;top:932.5px;width:8px;height:3.5px;background:#858687;"></div>
<div style="left:1896px;top:938px;width:8px;height:3.5px;background:#858687;"></div>
<div style="left:0px;top:962px;width:2026px;height:50px;background:#141414;"></div>
<div style="left:0px;top:956px;width:1946px;height:6px;background:#1f2022;"></div>
<div style="left:5.5px;top:981.5px;width:6.0px;height:6.0px;background:#8e8e8e;border-radius:50%;"></div>
<div style="left:15.5px;top:984.5px;width:6.0px;height:6.0px;background:#8e8e8e;border-radius:50%;"></div>
<div style="left:22.7px;top:991.2px;width:6.0px;height:6.0px;background:#8e8e8e;border-radius:50%;"></div>
<div style="left:26.2px;top:1001px;width:6.0000000000000036px;height:6px;background:#8e8e8e;border-radius:50%;"></div>
<div style="left:-3px;top:984px;width:6px;height:6px;background:#8e8e8e;border-radius:50%;"></div>
<div style="left:24px;top:1010px;width:6px;height:6px;background:#8e8e8e;border-radius:50%;"></div>
<div class="t" style="left:82.5px;top:974.97px;font-size:35px;line-height:35px;color:#cacaca;font-weight:bold;transform:scaleY(1.07);transform-origin:0 29.6px;">00001</div>
<div class="t" style="left:190.6px;top:974.97px;font-size:35px;line-height:35px;color:#cacaca;font-weight:bold;transform:scaleY(1.07);transform-origin:0 29.6px;">.</div>
<div class="t" style="left:201.8px;top:974.97px;font-size:35px;line-height:35px;color:#cacaca;font-weight:bold;transform:scaleY(1.07);transform-origin:0 29.6px;">01</div>
<div class="t" style="left:246px;top:974.97px;font-size:35px;line-height:35px;color:#cacaca;font-weight:bold;transform:scaleY(1.07);transform-origin:0 29.6px;">.</div>
<div class="t" style="left:258px;top:974.97px;font-size:35px;line-height:35px;color:#cacaca;font-weight:bold;transform:scaleY(1.07);transform-origin:0 29.6px;">01</div>
<div class="t" style="left:302.3px;top:974.97px;font-size:35px;line-height:35px;color:#cacaca;font-weight:bold;transform:scaleY(1.07);transform-origin:0 29.6px;">.</div>
<div class="t" style="left:313.5px;top:974.97px;font-size:35px;line-height:35px;color:#cacaca;font-weight:bold;transform:scaleY(1.07);transform-origin:0 29.6px;">00</div>
<svg style="position:absolute;left:388px;top:985px;" width="600" height="27" viewBox="0 0 600 27"><g fill="#c0c0c0"><polygon points="26,5.5 26,40 4,23"/><polygon points="66,5.5 66,40 48,23"/><polygon points="84,5.5 84,40 66,23"/><polygon points="112,5.5 112,40 130,23"/><polygon points="130,5.5 130,40 149,23"/><polygon points="165,5.5 165,40 187,23"/><rect x="214" y="5" width="2.5" height="35"/><polygon points="238,5.5 238,40 217,23"/><polygon points="356,-1 356,45 392,22"/><circle cx="440" cy="19.5" r="20.5"/></g><rect x="280" y="-1" width="40" height="40" fill="#5aaed8"/><rect x="494" y="1" width="60" height="40" rx="14" fill="none" stroke="#8a8a8a" stroke-width="4.5"/><g stroke="#8a8a8a" stroke-width="3"><line x1="515" y1="25" x2="519" y2="17"/><line x1="527" y1="25" x2="531" y2="17"/></g></svg>
<div class="t" style="left:980px;top:975.38px;font-size:22px;line-height:22px;color:#5585ad;font-weight:bold;">G</div>
<div class="t" style="left:981px;top:1003.38px;font-size:22px;line-height:22px;color:#5585ad;font-weight:bold;">D</div>
<div style="left:1007px;top:988px;width:9px;height:2px;background:#4e4e4e;"></div>
<div style="left:1014px;top:988px;width:2px;height:24px;background:#4e4e4e;"></div>
<div class="t" style="left:1031.3px;top:975.76px;font-size:24.5px;line-height:24.5px;color:#e2e2e2;font-weight:normal;transform:scaleY(1.07);transform-origin:0 20.7px;">00001</div>
<div class="t" style="left:1108.3px;top:975.76px;font-size:24.5px;line-height:24.5px;color:#e2e2e2;font-weight:normal;transform:scaleY(1.07);transform-origin:0 20.7px;">.</div>
<div class="t" style="left:1116.8px;top:975.76px;font-size:24.5px;line-height:24.5px;color:#e2e2e2;font-weight:normal;transform:scaleY(1.07);transform-origin:0 20.7px;">01</div>
<div class="t" style="left:1148px;top:975.76px;font-size:24.5px;line-height:24.5px;color:#e2e2e2;font-weight:normal;transform:scaleY(1.07);transform-origin:0 20.7px;">.</div>
<div class="t" style="left:1157px;top:975.76px;font-size:24.5px;line-height:24.5px;color:#e2e2e2;font-weight:normal;transform:scaleY(1.07);transform-origin:0 20.7px;">01</div>
<div class="t" style="left:1188.3px;top:975.76px;font-size:24.5px;line-height:24.5px;color:#e2e2e2;font-weight:normal;transform:scaleY(1.07);transform-origin:0 20.7px;">.</div>
<div class="t" style="left:1196.5px;top:975.76px;font-size:24.5px;line-height:24.5px;color:#e2e2e2;font-weight:normal;transform:scaleY(1.07);transform-origin:0 20.7px;">00</div>
<div class="t" style="left:1031.3px;top:1003.26px;font-size:24.5px;line-height:24.5px;color:#e2e2e2;font-weight:normal;transform:scaleY(1.07);transform-origin:0 20.7px;">00001</div>
<div class="t" style="left:1108.3px;top:1003.26px;font-size:24.5px;line-height:24.5px;color:#e2e2e2;font-weight:normal;transform:scaleY(1.07);transform-origin:0 20.7px;">.</div>
<div class="t" style="left:1116.8px;top:1003.26px;font-size:24.5px;line-height:24.5px;color:#e2e2e2;font-weight:normal;transform:scaleY(1.07);transform-origin:0 20.7px;">01</div>
<div class="t" style="left:1148px;top:1003.26px;font-size:24.5px;line-height:24.5px;color:#e2e2e2;font-weight:normal;transform:scaleY(1.07);transform-origin:0 20.7px;">.</div>
<div class="t" style="left:1157px;top:1003.26px;font-size:24.5px;line-height:24.5px;color:#e2e2e2;font-weight:normal;transform:scaleY(1.07);transform-origin:0 20.7px;">01</div>
<div class="t" style="left:1188.3px;top:1003.26px;font-size:24.5px;line-height:24.5px;color:#e2e2e2;font-weight:normal;transform:scaleY(1.07);transform-origin:0 20.7px;">.</div>
<div class="t" style="left:1196.5px;top:1003.26px;font-size:24.5px;line-height:24.5px;color:#e2e2e2;font-weight:normal;transform:scaleY(1.07);transform-origin:0 20.7px;">00</div>
<svg style="position:absolute;left:1262px;top:980px;" width="26" height="24" viewBox="0 0 26 24"><path d="M7.5,6.5 A9,9 0 1 0 18.5,6.5" stroke="#9a9a9a" stroke-width="3.4" fill="none"/><rect x="11.3" y="1" width="3.4" height="11" fill="#9a9a9a"/></svg>
<svg style="position:absolute;left:1330px;top:981px;" width="38" height="15" viewBox="0 0 38 15"><g stroke="#9c9c9c" stroke-width="2.2" fill="none"><polyline points="1,4 12,4 20,12 34,12"/></g><g fill="#9c9c9c"><rect x="1" y="11" width="4" height="2"/><rect x="8" y="11" width="4" height="2"/></g></svg>
<svg style="position:absolute;left:1383px;top:978px;" width="34" height="20" viewBox="0 0 34 20"><g fill="#9c9c9c"><rect x="2.5" y="2" width="2.2" height="16"/><rect x="7.5" y="9" width="2" height="2"/><rect x="11.5" y="9" width="2" height="2"/><rect x="15" y="2" width="2.2" height="16"/><rect x="17" y="6" width="14" height="8.5"/></g></svg>
<div style="left:1445.5px;top:980px;width:19.0px;height:19px;background:#787d7d;border-radius:50%;"></div>
<svg style="position:absolute;left:1481px;top:978px;" width="26" height="26" viewBox="0 0 26 26"><path d="M3.9,5.8 A5.2,5.2 0 1 1 3.9,11.2" stroke="#9c9c9c" stroke-width="4" fill="none"/><line x1="11.5" y1="12.5" x2="21" y2="21.5" stroke="#9c9c9c" stroke-width="4.2" stroke-linecap="round"/></svg>
<svg style="position:absolute;left:1524px;top:979px;" width="26" height="24" viewBox="0 0 26 24"><polygon points="12.8,1 23.8,20.8 1.5,20.8" fill="#9c9c9c"/><line x1="3.5" y1="6" x2="13.5" y2="16" stroke="#141414" stroke-width="4.4" stroke-linecap="round"/><line x1="3.5" y1="6" x2="13.5" y2="16" stroke="#9c9c9c" stroke-width="2" stroke-linecap="round"/></svg>
<div class="t" style="left:1589px;top:978.24px;font-size:25px;line-height:25px;color:#d0d0d0;font-weight:normal;letter-spacing:1.3px;">4 / 4</div>
<div style="left:1712px;top:990px;width:8px;height:2.5px;background:#d0d0d0;"></div>
<div class="t" style="left:1814px;top:978.24px;font-size:25px;line-height:25px;color:#d0d0d0;font-weight:normal;">0</div>
<div class="t" style="left:1899px;top:978.24px;font-size:25px;line-height:25px;color:#d0d0d0;font-weight:normal;">120.00</div>
<div style="left:2012px;top:979px;width:14px;height:12px;background:#555555;"></div>
<div style="left:2012px;top:993px;width:14px;height:10px;background:#555555;"></div>
<div style="left:1930px;top:0px;width:16px;height:962px;background:#232427;"></div>
<div style="left:1946px;top:0px;width:94px;height:948px;background:#0b0b0c;border-bottom-left-radius:8px;"></div>
<div style="left:1948px;top:0px;width:92px;height:946px;background:#262729;border-bottom-left-radius:7px;"></div>
<svg style="position:absolute;left:2004px;top:2px;" width="8" height="16" viewBox="0 0 8 16"><polygon points="0,0 0,16 8,8.0" fill="#b8b8b8"/></svg>
<div style="left:2022px;top:-1px;width:8px;height:22px;background:#d8d8d8;border-radius:5px 0 0 0;"></div>
<svg style="position:absolute;left:2004px;top:46px;" width="8" height="16" viewBox="0 0 8 16"><polygon points="0,0 0,16 8,8.0" fill="#b8b8b8"/></svg>
<div style="left:2022px;top:43px;width:8px;height:22px;background:#d8d8d8;border-radius:5px 0 0 0;"></div>
<svg style="position:absolute;left:2004px;top:90px;" width="8" height="16" viewBox="0 0 8 16"><polygon points="0,0 0,16 8,8.0" fill="#b8b8b8"/></svg>
<div style="left:2022px;top:87px;width:8px;height:22px;background:#d8d8d8;border-radius:5px 0 0 0;"></div>
<svg style="position:absolute;left:2004px;top:134px;" width="8" height="16" viewBox="0 0 8 16"><polygon points="0,0 0,16 8,8.0" fill="#b8b8b8"/></svg>
<div style="left:2022px;top:131px;width:8px;height:22px;background:#d8d8d8;border-radius:5px 0 0 0;"></div>
<svg style="position:absolute;left:2000px;top:178px;" width="13" height="13" viewBox="0 0 13 13"><polygon points="12,0 12,12 0,12" fill="#b8b8b8"/></svg>
<div style="left:2022px;top:178px;width:8px;height:20px;background:#d8d8d8;border-radius:5px 0 0 0;"></div>
<div style="left:1948px;top:296px;width:78px;height:216px;background:#3d6db2;"></div>
<div style="left:1948px;top:512px;width:78px;height:154px;background:#27282b;"></div>
<div style="left:1948px;top:666px;width:78px;height:280px;background:#3a3b3f;border-radius:0 0 0 7px;"></div>
<div style="left:1968px;top:706px;width:70px;height:64px;border-radius:6px;overflow:hidden;background:#d9d9d9;"><svg style="position:absolute;left:0;top:0" width="70" height="64" viewBox="0 0 70 64"><rect x="0" y="39" width="70" height="25" fill="#9a9ca0"/><g fill="#a9a9ab"><rect x="10.5" y="22" width="1.3" height="17"/><rect x="20.7" y="22" width="1.3" height="17"/><rect x="31.4" y="22" width="1.3" height="17"/><rect x="42" y="0" width="1.3" height="39"/><rect x="53" y="22" width="1.3" height="17"/></g><g fill="#4b4d53"><rect x="7.6" y="0" width="6.5" height="23" rx="1.5"/><rect x="18" y="0" width="6.8" height="23" rx="1.5"/><rect x="28.7" y="0" width="6.8" height="23" rx="1.5"/><rect x="49.7" y="0" width="6.5" height="23" rx="1.5"/></g><path d="M15,43 H38 L35,47 H40 L38,50.5 H32 L30.5,53 H37 L35.5,56 H29 L27,59.5 H10 Z" fill="#4b4d53"/><path d="M40,43 H52.7 L45,59.5 H31 L33,56.5 H38.5 L41,51.5 H35.5 L37.5,47.5 H42.5 Z" fill="#4b4d53"/></svg></div>
<div style="left:-20px;top:90px;width:1958px;height:866px;border:2px solid #4a6c9c;border-radius:12px;"></div>
</body></html>
